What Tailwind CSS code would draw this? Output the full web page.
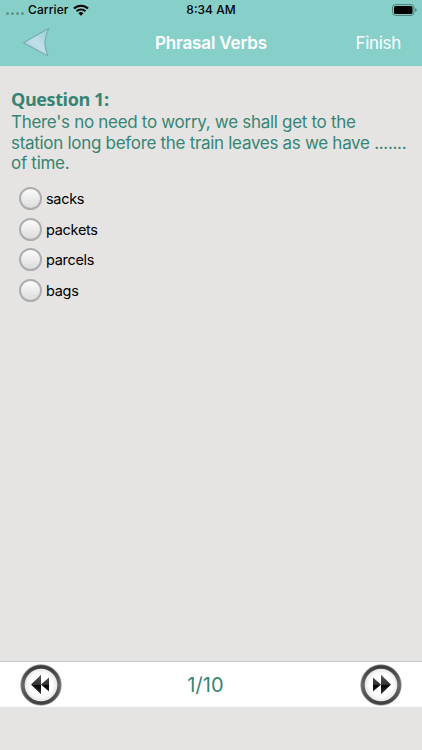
<!DOCTYPE html>
<html lang="en">
<head>
    <meta charset="UTF-8">
    <meta name="viewport" content="width=device-width, initial-scale=1.0">
    <title>Phrasal Verbs</title>
    <script src="https://cdn.jsdelivr.net/npm/@tailwindcss/browser@4"></script>
</head>
<body class="h-screen flex flex-col overflow-hidden bg-[#e5e4e3] font-['Inter',sans-serif]">
    <header class="h-[66px] shrink-0 bg-[#87d0ca]">
        <!-- Status bar -->
        <div class="h-5 grid grid-cols-3 items-center text-[12px] font-medium text-black">
            <div class="flex items-center pl-[6px]">
                <div class="flex gap-[2px] pt-[7px] mr-[4px]">
                    <span class="size-[3px] rounded-full bg-[#60958f]"></span>
                    <span class="size-[3px] rounded-full bg-[#60958f]"></span>
                    <span class="size-[3px] rounded-full bg-[#60958f]"></span>
                    <span class="size-[3px] rounded-full bg-[#60958f]"></span>
                </div>
                <span class="tracking-[0.1px]">Carrier</span>
                <svg class="ml-[4px] w-4 h-3" viewBox="0 0 16 12" fill="none" stroke="#000" stroke-width="2.1">
                    <path d="M1 4.6a10 10 0 0 1 14 0"/>
                    <path d="M3.6 7.3a6.3 6.3 0 0 1 8.8 0"/>
                    <path d="M5.5 9.3a3.6 3.6 0 0 1 5 0L8 11.8z" fill="#000" stroke="none"/>
                </svg>
            </div>
            <div class="text-center">8:34 AM</div>
            <div class="flex justify-end pr-[5px]">
                <svg class="w-[25px] h-3" viewBox="0 0 25 12">
                    <rect x=".6" y=".6" width="21.3" height="10.8" rx="2.8" fill="none" stroke="#4d7d78" stroke-width="1"/>
                    <rect x="2" y="2" width="18.5" height="8" rx="1.6" fill="#000"/>
                    <path d="M23.2 4v4q1.5-.6 1.5-2t-1.5-2z" fill="#4d7d78"/>
                </svg>
            </div>
        </div>
        <!-- Navigation bar -->
        <div class="h-[46px] grid grid-cols-3 items-center text-white">
            <svg class="ml-[21px] w-[30px] h-8" viewBox="0 0 30 32">
                <defs>
                    <linearGradient id="arrow" x1="0" y1="1" x2="1" y2="0">
                        <stop offset="0" stop-color="#a3c9de"/>
                        <stop offset=".5" stop-color="#c0dfe9"/>
                        <stop offset="1" stop-color="#98cfd6"/>
                    </linearGradient>
                </defs>
                <path d="M2.5 15.7 28 1.3Q24.3 9 24 15t3 14z" fill="url(#arrow)" stroke="#76aeb0" stroke-width="1.2" stroke-linejoin="round"/>
            </svg>
            <h1 class="pt-[2px] text-center text-[17px] font-semibold tracking-[-0.15px] whitespace-nowrap">Phrasal Verbs</h1>
            <button class="pt-[2px] justify-self-end mr-[21px] text-[17px] tracking-[-0.3px]">Finish</button>
        </div>
    </header>

    <main class="flex-1 pt-[22px] pl-[11px]">
        <h2 class="h-[24px] leading-[22px] text-[18px] font-bold font-['Open_Sans',sans-serif] tracking-[-0.4px] text-[#368474] whitespace-nowrap">Question 1:</h2>
        <p class="text-[17px] leading-[20.5px] tracking-[-0.3px] text-[#368474] whitespace-nowrap">
            There's no need to worry, we shall get to the<br>
            station long before the train leaves as we have .......<br>
            of time.
        </p>
        <ul class="mt-[10px] pl-[8px] text-[14.5px] tracking-[-0.3px] text-black">
            <li class="h-[30.6px] flex items-center gap-[4px]">
                <span class="size-[23px] rounded-full border-2 border-[#adadad] bg-linear-to-b from-[#fcfcfc] to-[#dcdcdc]"></span>sacks
            </li>
            <li class="h-[30.6px] flex items-center gap-[4px]">
                <span class="size-[23px] rounded-full border-2 border-[#adadad] bg-linear-to-b from-[#fcfcfc] to-[#dcdcdc]"></span>packets
            </li>
            <li class="h-[30.6px] flex items-center gap-[4px]">
                <span class="size-[23px] rounded-full border-2 border-[#adadad] bg-linear-to-b from-[#fcfcfc] to-[#dcdcdc]"></span>parcels
            </li>
            <li class="h-[30.6px] flex items-center gap-[4px]">
                <span class="size-[23px] rounded-full border-2 border-[#adadad] bg-linear-to-b from-[#fcfcfc] to-[#dcdcdc]"></span>bags
            </li>
        </ul>
    </main>

    <!-- Pager -->
    <footer class="h-[46px] mb-[43px] shrink-0 flex items-center justify-between px-5 bg-white border-t border-[#c9c9c9]">
        <svg class="size-[42px]" viewBox="0 0 42 42">
            <defs>
                <linearGradient id="ring" x1="0" y1="0" x2="0" y2="1">
                    <stop offset="0" stop-color="#3c3c3c"/>
                    <stop offset=".5" stop-color="#686868"/>
                    <stop offset="1" stop-color="#414141"/>
                </linearGradient>
                <radialGradient id="face">
                    <stop offset=".6" stop-color="#fff"/>
                    <stop offset="1" stop-color="#dedede"/>
                </radialGradient>
                <linearGradient id="glyph" x1="0" y1="0" x2="0" y2="1">
                    <stop offset="0" stop-color="#555"/>
                    <stop offset=".5" stop-color="#333"/>
                    <stop offset=".5" stop-color="#000"/>
                    <stop offset="1" stop-color="#333"/>
                </linearGradient>
            </defs>
            <circle cx="21" cy="21" r="18.3" fill="url(#face)" stroke="url(#ring)" stroke-width="4"/>
            <circle cx="21" cy="21" r="20.2" fill="none" stroke="#999" stroke-width=".7"/>
            <path d="M11 20.5 21 10.8v19.400zM21 20.5 29 13.5v14z" fill="url(#glyph)"/>
        </svg>
        <span class="mr-[11px] text-[20px] tracking-[0.1px] text-[#368474]">1/10</span>
        <svg class="size-[42px]" viewBox="0 0 42 42">
            <circle cx="21" cy="21" r="18.3" fill="url(#face)" stroke="url(#ring)" stroke-width="4"/>
            <circle cx="21" cy="21" r="20.2" fill="none" stroke="#999" stroke-width=".7"/>
            <path d="M31 20.5 21 10.8v19.400zM21 20.5 13 13.5v14z" fill="url(#glyph)"/>
        </svg>
    </footer>
</body>
</html>
